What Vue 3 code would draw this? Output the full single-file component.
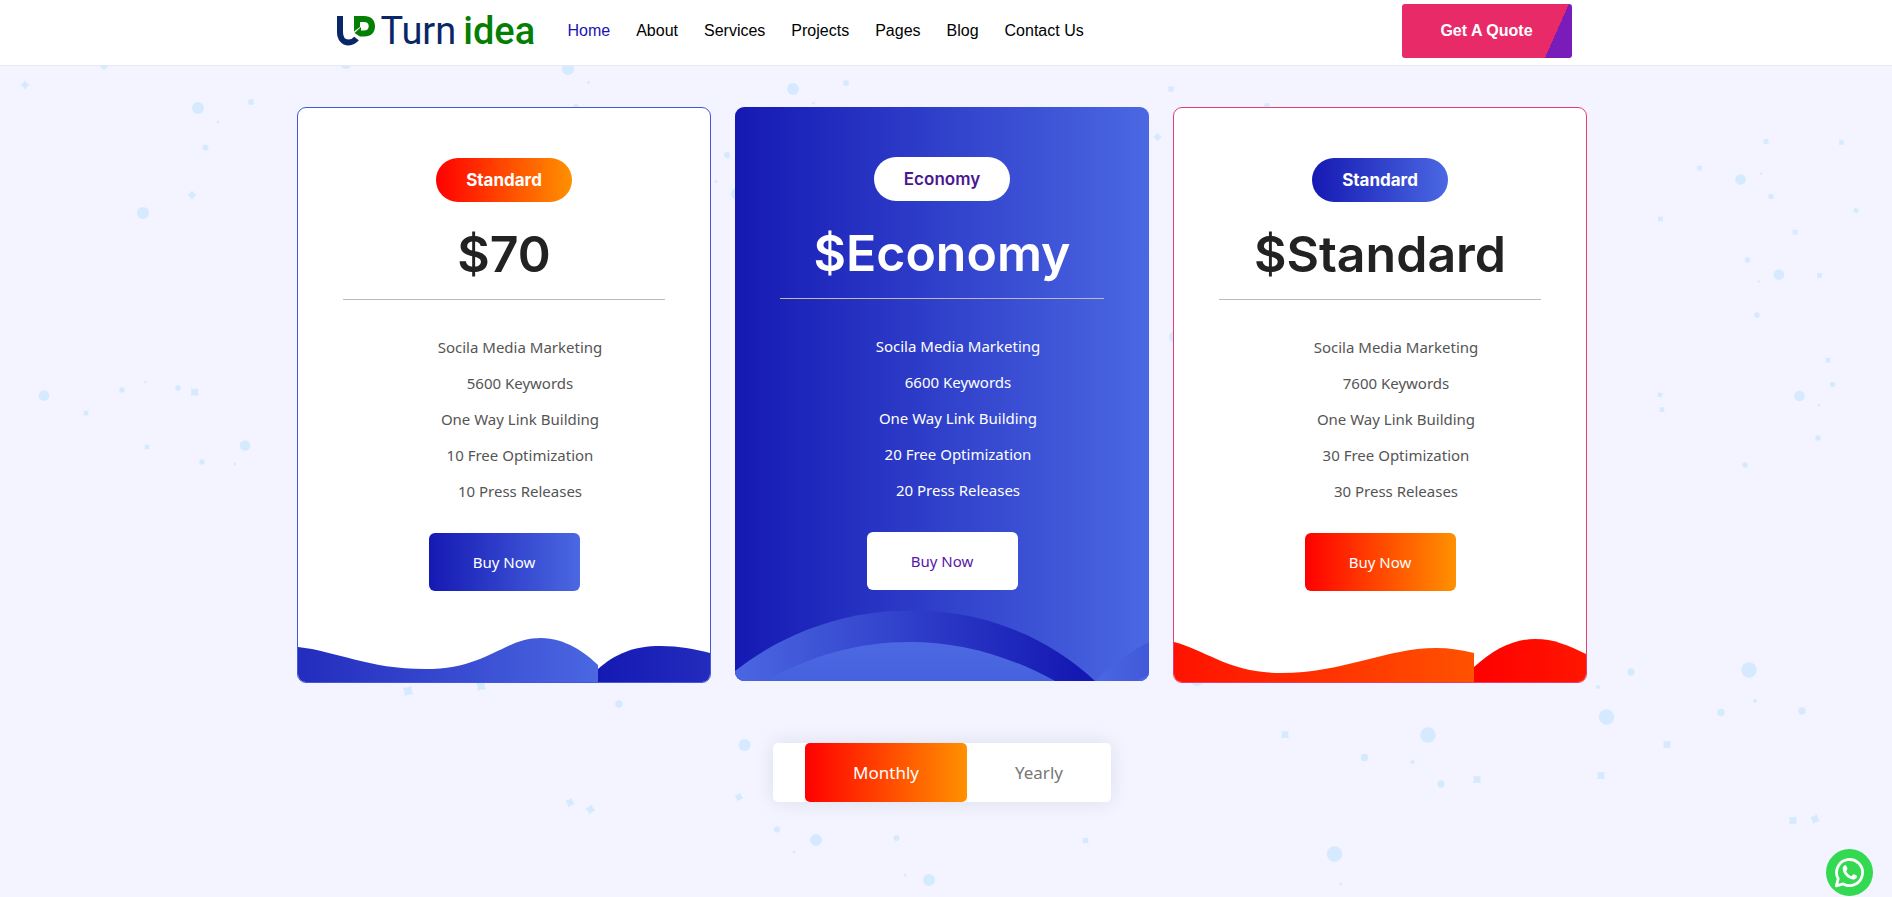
<script setup>
import { ref } from 'vue'

const nav = ['Home', 'About', 'Services', 'Projects', 'Pages', 'Blog', 'Contact Us']

const plans = [
  {
    tone: 'blue',
    name: 'Standard',
    price: '$70',
    features: ['Socila Media Marketing', '5600 Keywords', 'One Way Link Building', '10 Free Optimization', '10 Press Releases']
  },
  {
    tone: 'solid',
    name: 'Economy',
    price: '$Economy',
    features: ['Socila Media Marketing', '6600 Keywords', 'One Way Link Building', '20 Free Optimization', '20 Press Releases']
  },
  {
    tone: 'red',
    name: 'Standard',
    price: '$Standard',
    features: ['Socila Media Marketing', '7600 Keywords', 'One Way Link Building', '30 Free Optimization', '30 Press Releases']
  }
]

const period = ref('Monthly')
const periods = ['Monthly', 'Yearly']

// x, y, radius of the background bubbles
const bubbles = [
  [198, 108, 6], [251, 102, 3], [218, 122, 1.5], [205.5, 147.5, 3], [143, 213, 6],
  [44, 395.5, 5.3], [122, 390, 2.7], [145.5, 382, 1.3], [178, 388, 2.7], [245, 445.5, 5.3],
  [202, 462, 2.7], [235, 464, 1.3], [346, 63, 6], [568, 69, 6], [588.5, 82.5, 1.5],
  [576, 107, 3], [793, 89, 6], [846, 83, 3], [813.5, 103, 1.5], [727, 155, 3],
  [716, 181.5, 1.5], [737, 194, 6], [1175, 337, 6], [1267, 106, 3],
  [1766, 141.5, 2.7], [1740.5, 179.5, 5.3], [1761, 173.5, 1.3], [1771, 196.5, 2.7],
  [1747.5, 260, 2.7], [1779, 274.5, 5.3], [1759, 281.5, 1.3], [1757, 315, 2.7],
  [1832.5, 384.5, 2.7], [1799.5, 396, 5.3], [1819, 405, 1.3], [1818, 438, 2.7], [1745, 465, 2.7],
  [744.5, 745, 6], [777, 829.5, 3], [816, 840, 6], [794, 852, 1.5], [896.5, 838, 3],
  [905, 875, 1.5], [929, 880, 6], [619, 704, 3.7], [1197, 679, 7],
  [1631, 672, 3.7], [1598, 687, 2], [1749, 670, 7.7], [1755, 701, 2], [1721, 712.5, 3.7],
  [1802, 711, 3.7], [1606.5, 717, 7.7], [1428, 735, 7.7], [1364.5, 757.5, 3.7],
  [1412.5, 762, 2], [1441, 784, 3.7], [1334.5, 854, 7.7], [1341, 884, 1.5]
]

// x, y, scale, rotation of the four-pointed stars
const stars = [
  [25, 85, 4.5, 0], [104, 66, 4.5, 0], [192, 195, 4.5, 0], [194.5, 392, 5.2, 45], [86, 413, 3.6, 45],
  [147, 447, 3.6, 45], [1157.5, 137, 4.5, 0], [1171, 89, 4, 45], [1841.5, 142.5, 3.6, 45],
  [1699.5, 168, 3.6, 45], [1856, 210.5, 3.6, 60], [1660.5, 219, 3.6, 45], [1795, 232, 3.6, 45],
  [1819.5, 275.5, 3.6, 45], [1828, 360, 3.6, 45], [1660, 395, 3.6, 60], [1662, 409.5, 3.6, 45],
  [739, 797, 4.5, 20], [1085.5, 840.5, 4.2, 45], [408, 691, 6, 35], [481, 686, 6, 35],
  [570, 802.5, 5, 20], [590.5, 809.5, 5, 10], [1285, 734.5, 5.2, 45], [1477, 779.5, 5.2, 45],
  [1667, 744.5, 5.2, 45], [1601, 775.5, 5.2, 45], [1793, 820.5, 5.2, 45], [1815, 819, 5.2, 22]
]
</script>

<template>
  <div class="page">
    <svg class="backdrop" viewBox="0 0 1892 897" preserveAspectRatio="xMidYMin slice" aria-hidden="true">
      <circle v-for="(b, i) in bubbles" :key="'b' + i" :cx="b[0]" :cy="b[1]" :r="b[2]" />
      <path
        v-for="(s, i) in stars"
        :key="'s' + i"
        d="M0-1Q.35-.35 1 0Q.35.35 0 1Q-.35.35-1 0Q-.35-.35 0-1Z"
        :transform="`translate(${s[0]} ${s[1]}) rotate(${s[3]}) scale(${s[2]})`"
      />
    </svg>

    <header class="header">
      <div class="bar">
        <a class="logo" href="#" aria-label="Up Turn idea">
          <svg class="mark" width="38" height="30" viewBox="0 0 38 30" aria-hidden="true">
            <path d="M3 0V16C3 22.500 6.500 26.500 11.500 26.500C15 26.500 17.500 25 19.500 22.500" fill="none" stroke="#092768" stroke-width="6" />
            <path d="M17 0H27C34 0 38 4 38 10.200C38 16.500 34 20.500 27.500 20.500H23L26 22.500L17.500 17L24 11V14.500H27C30 14.500 31.700 13 31.700 10.200C31.700 7.400 30 6 27 6H23V11L17 15.500Z" fill="#047f04" />
          </svg>
          <span class="wordmark"><span class="turn">Turn</span><span class="idea">idea</span></span>
        </a>
        <nav class="nav" aria-label="Main">
          <a v-for="(item, i) in nav" :key="item" href="#" :class="{ current: i === 0 }">{{ item }}</a>
        </nav>
        <a class="quote" href="#">Get A Quote</a>
      </div>
    </header>

    <main class="main">
      <section class="plans">
        <article v-for="(plan, i) in plans" :key="i" class="card" :class="plan.tone">
          <span class="pill">{{ plan.name }}</span>
          <h2 class="price">{{ plan.price }}</h2>
          <ul class="features">
            <li v-for="f in plan.features" :key="f">{{ f }}</li>
          </ul>
          <button type="button" class="buy">Buy Now</button>

          <svg v-if="plan.tone === 'blue'" class="wave" viewBox="0 0 412 70" preserveAspectRatio="none" aria-hidden="true">
            <defs>
              <linearGradient id="b1"><stop stop-color="#232cbd" /><stop offset="1" stop-color="#4b67e2" /></linearGradient>
              <linearGradient id="b2"><stop stop-color="#1519b3" /><stop offset="1" stop-color="#232cbd" /></linearGradient>
            </defs>
            <path d="M0 35C38 39 70 57 127 57C190 57 205 26 243 26C267 26 288 41 300 53V70H0Z" fill="url(#b1)" />
            <path d="M300 57C317 42 335 34 363 34C381 34 396 37 412 41V70H300Z" fill="url(#b2)" />
          </svg>
          <svg v-else-if="plan.tone === 'solid'" class="wave" viewBox="0 0 414 70" preserveAspectRatio="none" aria-hidden="true">
            <defs>
              <linearGradient id="s1" gradientUnits="userSpaceOnUse" x1="0" x2="340"><stop stop-color="#4b67e2" /><stop offset="1" stop-color="#1519b3" /></linearGradient>
              <linearGradient id="s2"><stop stop-color="#4b67e2" /><stop offset="1" stop-color="#4159d9" /></linearGradient>
              <linearGradient id="s3" x2="0" y2="1"><stop stop-color="#4c69e3" /><stop offset="1" stop-color="#4661dd" /></linearGradient>
            </defs>
            <path d="M0 60C105-23 262-22 360 70H0Z" fill="url(#s1)" />
            <path d="M30 70C122 18 226 18 320 70Z" fill="url(#s3)" />
            <path d="M360 70C375 55 396 40 414 31V70Z" fill="url(#s2)" />
            <path d="M402 70L414 63V70Z" fill="#4b67e2" />
          </svg>
          <svg v-else class="wave" viewBox="0 0 412 70" preserveAspectRatio="none" aria-hidden="true">
            <defs>
              <linearGradient id="r1"><stop stop-color="#ff1200" /><stop offset="1" stop-color="#ff5200" /></linearGradient>
              <linearGradient id="r2"><stop stop-color="#f00" /><stop offset="1" stop-color="#ff1600" /></linearGradient>
            </defs>
            <path d="M0 30C32 38 55 61 107 61C170 61 212 36 262 36C276 36 288 38 300 41V70H0Z" fill="url(#r1)" />
            <path d="M300 55C320 37 340 27 361 27C380 27 393 33 412 42V70H300Z" fill="url(#r2)" />
          </svg>
        </article>
      </section>

      <div class="toggle" role="group" aria-label="Billing period">
        <button
          v-for="p in periods"
          :key="p"
          type="button"
          :class="{ active: p === period }"
          :aria-pressed="p === period"
          @click="period = p"
        >{{ p }}</button>
      </div>
    </main>

    <a class="whatsapp" href="#" aria-label="WhatsApp">
      <svg viewBox="0 0 47 47" aria-hidden="true">
        <circle cx="23.500" cy="23.500" r="23.500" fill="#33d951" />
        <path d="M10.300 36.800L12.200 29.800A13 13 0 1 1 17.300 34.900Z" fill="none" stroke="#fff" stroke-width="2.800" stroke-linejoin="round" />
        <path d="M18.400 16.400C17.500 16.800 16.600 18 16.700 20C16.900 25 22.500 30.300 27.200 30.500C29.300 30.600 31.100 29.200 31.100 27.300C31.100 26.700 28.100 25.200 27.500 25.300C26.900 25.400 26 27.300 25.400 27.200C23.500 26.700 20.800 24.200 20.200 22.300C20 21.700 21.600 20.800 21.500 20C21.400 19.200 20.400 16.900 20 16.500C19.700 16.200 18.900 16.200 18.400 16.400Z" fill="#fff" />
      </svg>
    </a>
  </div>
</template>

<style>
body {
  background: #f3f4ff;
}
</style>

<style scoped>
.page {
  position: relative;
  min-height: 100vh;
  overflow: hidden;
  font-family: "Noto Sans", "Open Sans", sans-serif;
  font-size: 15px;
  color: #555;
}
.page * {
  box-sizing: border-box;
}
a {
  text-decoration: none;
}
.backdrop {
  position: absolute;
  inset: 0;
  width: 100%;
  height: 100%;
  fill: #d6eaff;
}
.header {
  position: relative;
  padding-left: 16px;
  background: #fff;
  border-bottom: 1px solid #e8ebf4;
}
.bar {
  display: flex;
  align-items: center;
  max-width: 1235px;
  margin: 0 auto;
  padding: 4px 0 7px;
}
.logo {
  display: flex;
  align-items: center;
  gap: 6px;
  width: 231px;
}
.wordmark {
  display: flex;
  gap: 7px;
  font: 38px/40px Roboto, sans-serif;
}
.turn {
  color: #092768;
}
.idea {
  color: #047f04;
  font-weight: 500;
}
.nav {
  display: flex;
  gap: 26px;
  font-family: "Liberation Sans", Arial, sans-serif;
  font-size: 16px;
}
.nav a {
  color: #000;
}
.nav .current {
  color: #1b12b5;
}
.quote {
  margin-left: auto;
  width: 170px;
  border-radius: 3px;
  background: linear-gradient(114deg, #e92a69 86%, #7a1cba 86%);
  color: #fff;
  font: bold 16px/54px "Liberation Sans", Arial, sans-serif;
  text-align: center;
}
.main {
  position: relative;
  display: flex;
  flex-direction: column;
  align-items: center;
  padding: 41px 8px 92px 0;
}
.plans {
  display: grid;
  grid-template-columns: repeat(3, 1fr);
  align-items: start;
  gap: 24px;
  width: 100%;
  max-width: 1290px;
}
.card {
  position: relative;
  display: flex;
  flex-direction: column;
  align-items: center;
  padding: 50px 45px 91px;
  border-radius: 9px;
  background: #fff;
  overflow: hidden;
}
.blue {
  border: 1px solid #4259d8;
}
.red {
  border: 1px solid #e3406f;
}
.solid {
  background: linear-gradient(90deg, #1519b3, #4b68e2);
  color: #fff;
}
.pill {
  padding: 0 30px;
  border-radius: 22px;
  color: #fff;
  font: 700 17px/44px Inter, sans-serif;
}
.blue .pill,
.red .buy,
.toggle .active {
  background: linear-gradient(90deg, #f00, #ff9100);
}
.red .pill,
.blue .buy {
  background: linear-gradient(90deg, #1519b3, #4b68e2);
}
.solid .pill {
  background: #fff;
  color: #4a1791;
  font-weight: 600;
}
.price {
  align-self: stretch;
  margin: 22px 0 29px;
  padding-bottom: 15px;
  border-bottom: 1px solid #bbb;
  color: #222;
  font: 600 50px/60px Inter, sans-serif;
  text-align: center;
}
.solid .price {
  color: #fff;
}
.features {
  align-self: stretch;
  margin: 0 0 24px;
  padding: 0 0 0 32px;
  list-style: none;
  line-height: 36px;
  text-align: center;
}
.buy {
  width: 151px;
  height: 58px;
  border: 0;
  border-radius: 6px;
  color: #fff;
  font: inherit;
  cursor: pointer;
}
.solid .buy {
  background: #fff;
  color: #5a16a8;
}
.wave {
  position: absolute;
  left: 0;
  bottom: 0;
  width: 100%;
  height: 70px;
}
.toggle {
  display: flex;
  margin-top: 60px;
  padding-left: 32px;
  border-radius: 5px;
  background: #fff;
  box-shadow: 0 0 20px rgba(40, 30, 90, 0.1);
}
.toggle button {
  height: 59px;
  padding: 0 48px;
  border: 0;
  border-radius: 5px;
  background: none;
  color: #777;
  font: inherit;
  font-size: 17px;
  cursor: pointer;
}
.toggle .active {
  color: #fff;
}
.whatsapp {
  position: fixed;
  right: 19px;
  bottom: 1px;
  width: 47px;
  height: 47px;
}
.whatsapp svg {
  display: block;
}
</style>
